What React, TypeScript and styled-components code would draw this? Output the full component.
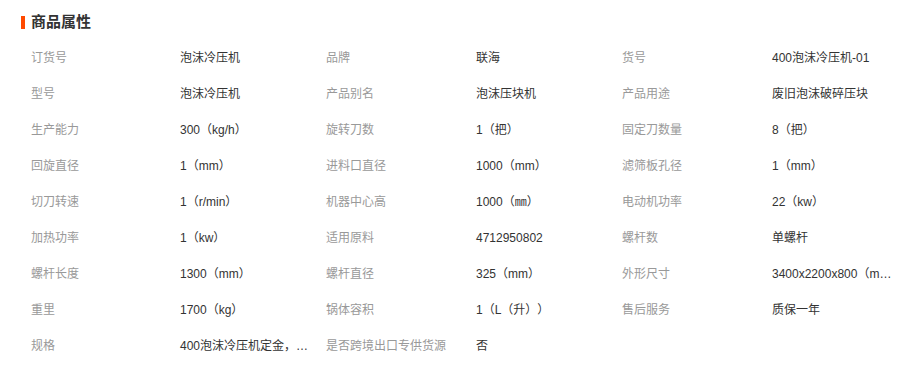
import React from 'react'
import styled, { createGlobalStyle } from 'styled-components'

const GlobalStyle = createGlobalStyle`
    html, body {
        margin: 0;
        padding: 0;
        background: #fff;
    }
    body {
        font-family: 'Liberation Sans', 'Noto Sans CJK SC', sans-serif;
        font-size: 12px;
        color: #333;
    }
`

type Attr = [string, string]

const attrs: Attr[] = [
    ['订货号', '泡沫冷压机'],
    ['品牌', '联海'],
    ['货号', '400泡沫冷压机-01'],
    ['型号', '泡沫冷压机'],
    ['产品别名', '泡沫压块机'],
    ['产品用途', '废旧泡沫破碎压块'],
    ['生产能力', '300（kg/h）'],
    ['旋转刀数', '1（把）'],
    ['固定刀数量', '8（把）'],
    ['回旋直径', '1（mm）'],
    ['进料口直径', '1000（mm）'],
    ['滤筛板孔径', '1（mm）'],
    ['切刀转速', '1（r/min）'],
    ['机器中心高', '1000（㎜）'],
    ['电动机功率', '22（kw）'],
    ['加热功率', '1（kw）'],
    ['适用原料', '4712950802'],
    ['螺杆数', '单螺杆'],
    ['螺杆长度', '1300（mm）'],
    ['螺杆直径', '325（mm）'],
    ['外形尺寸', '3400x2200x800（mm）'],
    ['重里', '1700（kg）'],
    ['锅体容积', '1（L（升））'],
    ['售后服务', '质保一年'],
    ['规格', '400泡沫冷压机定金，具体价格详询'],
    ['是否跨境出口专供货源', '否'],
]

export default function App() {
    return (
        <>
            <GlobalStyle />
            <Section>
                <Header>
                    <Marker />
                    <Title>商品属性</Title>
                </Header>
                <Grid>
                    {attrs.map(([label, value]) => (
                        <React.Fragment key={label}>
                            <Label>{label}</Label>
                            <Value>{value}</Value>
                        </React.Fragment>
                    ))}
                </Grid>
            </Section>
        </>
    )
}

const Section = styled.div`
    width: 899px;
    padding-top: 12px;
`

const Header = styled.div`
    display: flex;
    align-items: center;
    height: 20px;
    padding-left: 21px;
`

const Marker = styled.span`
    width: 4px;
    height: 13px;
    background: #ff4a00;
    margin-right: 6px;
`

const Title = styled.h3`
    margin: 0;
    font-size: 15px;
    font-weight: bold;
    color: #333;
    line-height: 20px;
`

const Grid = styled.div`
    display: grid;
    grid-template-columns: 149px 146px 150px 146px 150px 137px;
    grid-auto-rows: 36px;
    margin-top: 8px;
    padding-left: 21px;
`

const Cell = styled.div`
    padding: 0 10px;
    line-height: 36px;
    white-space: nowrap;
    overflow: hidden;
    text-overflow: ellipsis;
    text-spacing-trim: space-all;
`

const Label = styled(Cell)`
    color: #999;
`

const Value = styled(Cell)`
    color: #333;
    padding-right: 4px;
`
